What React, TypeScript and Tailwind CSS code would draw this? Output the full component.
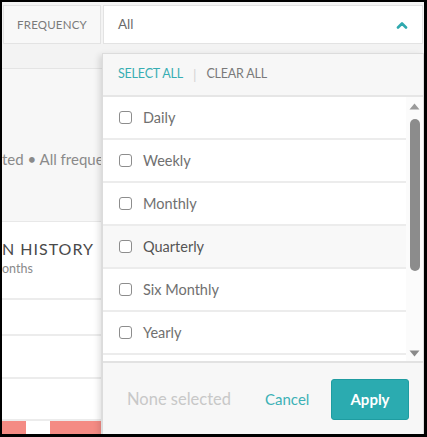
import { useState } from 'react';

const options = ['Daily', 'Weekly', 'Monthly', 'Quarterly', 'Six Monthly', 'Yearly'];

function ChevronUp() {
  return (
    <svg width="12" height="8" viewBox="0 0 12 8" fill="none">
      <path d="M2 6.5 L6 2.5 L10 6.5" stroke="#2fa9ae" strokeWidth="2.6" strokeLinecap="round" strokeLinejoin="round" />
    </svg>
  );
}

function FakeScrollbar() {
  return (
    <div className="w-[17px] shrink-0 flex flex-col items-center bg-[#fbfbfb] pt-[6px] pb-[4px]">
      <svg width="11" height="7" viewBox="0 0 11 7">
        <path d="M5.5 0.5 L10.5 6.5 L0.5 6.5 Z" fill="#9a9a9a" />
      </svg>
      <div className="mt-[9px] h-[152px] w-[10px] rounded-full bg-[#8c8c8c]" />
      <div className="flex-1" />
      <svg width="11" height="7" viewBox="0 0 11 7">
        <path d="M0.5 0.5 L10.5 0.5 L5.5 6.5 Z" fill="#8a8a8a" />
      </svg>
    </div>
  );
}

export default function App() {
  const [selected, setSelected] = useState<string[]>([]);

  const toggle = (o: string) =>
    setSelected((s) => (s.includes(o) ? s.filter((x) => x !== o) : [...s, o]));

  return (
    <div
      className="relative w-[427px] h-[437px] overflow-hidden border-l-2 border-t-2 border-r-[3px] border-b-[3px] border-black bg-[#f4f4f4] text-[#666]"
      style={{ fontFamily: 'Lato, "Noto Sans", Arial, sans-serif' }}
    >
      {/* top filter bar */}
      <div className="flex h-[42px] pt-[3px] gap-[2px] pl-px">
        <div className="w-[98px] h-[39px] flex items-center justify-center border border-[#e3e3e3] bg-[#f8f8f8] text-[11.5px] tracking-[0.2px] text-[#7a7a7a]">
          FREQUENCY
        </div>
        <div className="w-[320px] h-[39px] flex items-center justify-between border border-[#e3e3e3] bg-white pl-[14px] pr-[14px]">
          <span className="text-[13.5px] text-[#6a6a6a]">All</span>
          <ChevronUp />
        </div>
      </div>

      {/* strip under bar */}
      <div className="h-[25px] bg-[#f3f3f3] border-b border-[#e4e4e4]" />

      {/* page content behind the dropdown */}
      <div className="w-[99px] overflow-hidden">
        <div className="h-[152px] bg-[#f7f7f7] flex items-center pt-[28px]">
          <span className="whitespace-nowrap text-[15px] text-[#8a8a8a]">ted • All frequencies</span>
        </div>
        <div className="bg-white border-t border-[#e8e8e8] h-[77px] pt-[17px]">
          <div className="whitespace-nowrap text-[16px] tracking-[1px] text-[#4a4a4a] leading-[20px]">N HISTORY</div>
          <div className="whitespace-nowrap text-[12.5px] text-[#8a8a8a] leading-[16px] mt-[2px]">onths</div>
        </div>
        <div className="bg-white border-t-2 border-[#ececec] h-[36px]" />
        <div className="bg-white border-t-2 border-[#ececec] h-[43px]" />
        <div className="bg-white border-t-2 border-[#ececec] h-[42px]" />
        <div className="bg-white border-t-2 border-[#ececec] flex gap-[24px]">
          <div className="w-[24px] h-[16px] bg-[#f48b84]" />
          <div className="w-[51px] h-[16px] bg-[#f48b84]" />
        </div>
      </div>

      {/* dropdown menu */}
      <div className="absolute left-[100px] top-[51px] w-[322px] h-[383px] flex flex-col border border-[#dcdcdc] bg-white shadow-[-3px_2px_6px_rgba(0,0,0,0.12)]">
        <div className="h-[43px] shrink-0 flex items-center gap-[10px] pl-[15px] bg-[#f7f7f7] border-b-2 border-[#e6e6e6] text-[12.5px]">
          <button className="text-[#38aeb3] tracking-[-0.2px]">SELECT ALL</button>
          <span className="text-[#d4d4d4] text-[14px]">|</span>
          <button className="text-[#7a7a7a] tracking-[-0.2px]">CLEAR ALL</button>
        </div>

        <div className="flex h-[264px] shrink-0 overflow-hidden">
          <ul className="flex-1 overflow-hidden">
            {options.map((o) => (
              <li
                key={o}
                onClick={() => toggle(o)}
                className={`h-[43px] flex items-center gap-[11px] pl-[16px] border-b-2 border-[#ececec] cursor-pointer ${
                  o === 'Quarterly' ? 'bg-[#f8f8f8]' : 'bg-white'
                }`}
              >
                <span
                  className={`w-[13px] h-[13px] rounded-[3px] border-[1.5px] border-[#8d8d8d] ${
                    selected.includes(o) ? 'bg-[#2fa9ae]' : 'bg-white'
                  }`}
                />
                <span className={`text-[14.5px] ${o === 'Quarterly' ? 'text-[#555]' : 'text-[#707070]'}`}>{o}</span>
              </li>
            ))}
          </ul>
          <FakeScrollbar />
        </div>

        <div className="flex-1 flex items-center bg-[#f7f7f7] border-t-2 border-[#e2e2e2] pl-[24px] pr-[14px]">
          <span className="text-[16.5px] text-[#c8c8c8]">
            {selected.length ? `${selected.length} selected` : 'None selected'}
          </span>
          <button className="ml-[34px] text-[15px] text-[#3cb1b6]">Cancel</button>
          <button className="ml-auto w-[78px] h-[41px] rounded-[3px] border border-[#1f9ca1] bg-[#2babb0] text-[15px] font-bold text-white">
            Apply
          </button>
        </div>
      </div>
    </div>
  );
}
